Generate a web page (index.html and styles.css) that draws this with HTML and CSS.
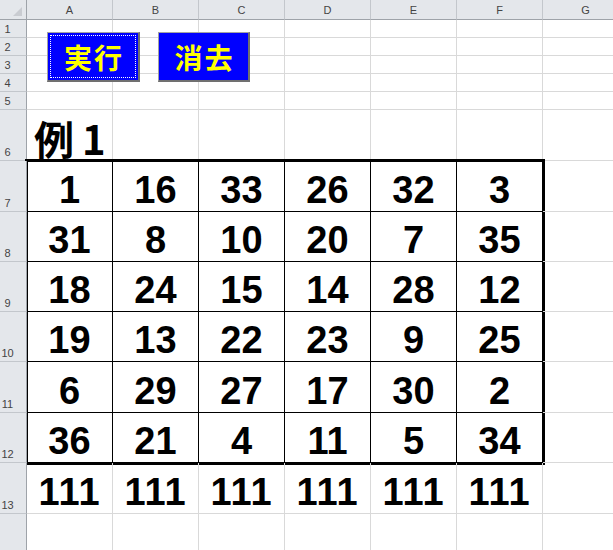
FILE: index.html
```html
<!DOCTYPE html>
<html lang="ja">
<head>
<meta charset="utf-8">
<title>Sheet</title>
<link rel="stylesheet" href="styles.css">
</head>
<body>
<div class="wrap">
  <div class="sheet">
    <div class="hd corner"><span class="tri"></span></div>
    <div class="hd col">A</div><div class="hd col">B</div><div class="hd col">C</div><div class="hd col">D</div><div class="hd col">E</div><div class="hd col">F</div><div class="hd col">G</div>

    <div class="hd row">1</div><div class="c"></div><div class="c"></div><div class="c"></div><div class="c"></div><div class="c"></div><div class="c"></div><div class="c"></div>
    <div class="hd row">2</div><div class="c"></div><div class="c"></div><div class="c"></div><div class="c"></div><div class="c"></div><div class="c"></div><div class="c"></div>
    <div class="hd row">3</div><div class="c"></div><div class="c"></div><div class="c"></div><div class="c"></div><div class="c"></div><div class="c"></div><div class="c"></div>
    <div class="hd row">4</div><div class="c"></div><div class="c"></div><div class="c"></div><div class="c"></div><div class="c"></div><div class="c"></div><div class="c"></div>
    <div class="hd row">5</div><div class="c"></div><div class="c"></div><div class="c"></div><div class="c"></div><div class="c"></div><div class="c"></div><div class="c"></div>

    <div class="hd row">6</div><div class="c title">例1</div><div class="c"></div><div class="c"></div><div class="c"></div><div class="c"></div><div class="c"></div><div class="c"></div>

    <div class="block">
      <div class="n">1</div><div class="n">16</div><div class="n">33</div><div class="n">26</div><div class="n">32</div><div class="n">3</div>
      <div class="n">31</div><div class="n">8</div><div class="n">10</div><div class="n">20</div><div class="n">7</div><div class="n">35</div>
      <div class="n">18</div><div class="n">24</div><div class="n">15</div><div class="n">14</div><div class="n">28</div><div class="n">12</div>
      <div class="n">19</div><div class="n">13</div><div class="n">22</div><div class="n">23</div><div class="n">9</div><div class="n">25</div>
      <div class="n">6</div><div class="n">29</div><div class="n">27</div><div class="n">17</div><div class="n">30</div><div class="n">2</div>
      <div class="n">36</div><div class="n">21</div><div class="n">4</div><div class="n">11</div><div class="n">5</div><div class="n">34</div>
    </div>

    <div class="hd row">7</div><div class="c"></div>
    <div class="hd row">8</div><div class="c"></div>
    <div class="hd row">9</div><div class="c"></div>
    <div class="hd row">10</div><div class="c"></div>
    <div class="hd row">11</div><div class="c"></div>
    <div class="hd row">12</div><div class="c"></div>

    <div class="hd row">13</div><div class="c num">111</div><div class="c num">111</div><div class="c num">111</div><div class="c num">111</div><div class="c num">111</div><div class="c num">111</div><div class="c"></div>

    <div class="hd row"></div><div class="c"></div><div class="c"></div><div class="c"></div><div class="c"></div><div class="c"></div><div class="c"></div><div class="c"></div>
  </div>

  <div class="buttons">
    <div class="btn"><span class="focus">実行</span></div>
    <div class="btn"><span class="plain">消去</span></div>
  </div>
</div>
</body>
</html>
```

FILE: styles.css
```css
html, body {
  margin: 0;
  padding: 0;
  background: #fff;
  overflow: hidden;
}

.wrap {
  position: relative;
  width: 613px;
  height: 550px;
  overflow: hidden;
}

.sheet {
  display: grid;
  grid-template-columns: 27px repeat(7, 86px);
  grid-template-rows: 20px repeat(5, 18px) 51px 51px 50px 50px 50px 51px 50px 51px 51px;
  width: 629px;
  font-family: "Liberation Sans", "Noto Sans CJK JP", sans-serif;
}

.hd {
  background: #e4e7eb;
  color: #444;
  font-size: 11px;
  box-sizing: border-box;
  display: flex;
}

.corner {
  border-right: 1px solid #9ea3a9;
  border-bottom: 1px solid #9ea3a9;
  position: relative;
}

.tri {
  position: absolute;
  right: 4px;
  bottom: 3px;
  width: 0;
  height: 0;
  border-left: 9px solid transparent;
  border-bottom: 9px solid #c9ccd1;
}

.col {
  border-right: 1px solid #c3c7cc;
  border-bottom: 1px solid #9ea3a9;
  align-items: center;
  justify-content: center;
  padding-top: 1px;
}

.row {
  border-right: 1px solid #9ea3a9;
  border-bottom: 1px solid #c3c7cc;
  align-items: flex-end;
  justify-content: center;
  padding-right: 11px;
  padding-bottom: 1px;
  line-height: 14px;
}

.c {
  box-sizing: border-box;
  border-right: 1px solid #d9d9d9;
  border-bottom: 1px solid #d9d9d9;
  min-width: 0;
}

.title {
  display: flex;
  align-items: flex-end;
  font-family: "Noto Sans CJK JP", sans-serif;
  font-weight: 700;
  font-size: 40px;
  line-height: 1;
  padding-left: 7px;
  padding-bottom: 2px;
  letter-spacing: 8px;
  white-space: nowrap;
  overflow: visible;
}

.block {
  grid-column: 2 / 8;
  grid-row: 8 / 14;
  display: grid;
  grid-template-columns: repeat(6, 86px);
  grid-template-rows: 51px 50px 50px 50px 51px 50px;
  outline: 3px solid #000;
  outline-offset: -1px;
}

.n, .num {
  box-sizing: border-box;
  display: flex;
  align-items: flex-end;
  justify-content: center;
  font-family: "Liberation Sans", sans-serif;
  font-weight: 700;
  font-size: 38px;
  line-height: 1;
  color: #000;
  padding-bottom: 2px;
}

.n {
  border-right: 1px solid #000;
  border-bottom: 1px solid #000;
}

.num {
  letter-spacing: 1px;
}

.buttons {
  position: absolute;
  top: 32px;
  left: 47px;
  display: flex;
  gap: 18px;
}

.btn {
  box-sizing: border-box;
  width: 93px;
  height: 50px;
  background: #0000ff;
  border-top: 1px solid #a3a3a3;
  border-left: 1px solid #a3a3a3;
  border-right: 2px solid #707070;
  border-bottom: 2px solid #707070;
  display: flex;
  padding: 2px;
}

.btn + .btn {
  width: 92px;
}

.btn span {
  flex: 1;
  display: flex;
  align-items: center;
  justify-content: center;
  color: #ffff00;
  font-family: "Noto Sans CJK JP", sans-serif;
  font-weight: 700;
  font-size: 28px;
  letter-spacing: 2px;
  padding-left: 2px;
}

.focus {
  border: 1px dotted #ffffff;
}

.plain {
  border: 1px solid transparent;
}
```
